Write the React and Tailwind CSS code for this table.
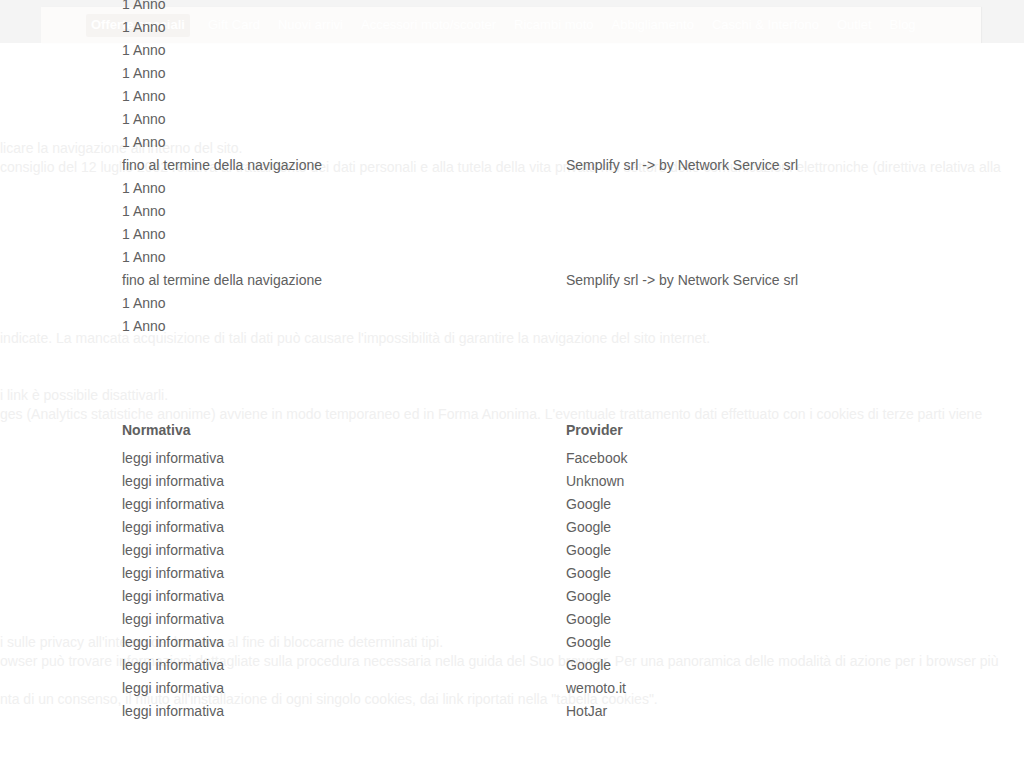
import React from "react";

const t1 = [
  ["1 Anno", ""],
  ["1 Anno", ""],
  ["1 Anno", ""],
  ["1 Anno", ""],
  ["1 Anno", ""],
  ["1 Anno", ""],
  ["1 Anno", ""],
  ["fino al termine della navigazione", "Semplify srl -> by Network Service srl"],
  ["1 Anno", ""],
  ["1 Anno", ""],
  ["1 Anno", ""],
  ["1 Anno", ""],
  ["fino al termine della navigazione", "Semplify srl -> by Network Service srl"],
  ["1 Anno", ""],
  ["1 Anno", ""],
];

const providers = [
  "Facebook",
  "Unknown",
  "Google",
  "Google",
  "Google",
  "Google",
  "Google",
  "Google",
  "Google",
  "Google",
  "wemoto.it",
  "HotJar",
];

const nav = [
  "Gift Card",
  "Nuovi arrivi",
  "Accessori moto/scooter",
  "Ricambi moto",
  "Abbigliamento",
  "Caschi & Interfono",
  "Outlet",
  "Blog",
];

export default function App() {
  return (
    <div className="relative w-full h-[768px] overflow-hidden bg-white font-['Liberation_Sans',Arial,sans-serif]">
      {/* header */}
      <div className="h-[43px] bg-[#f4f4f4] pt-[7px] pl-[41px]">
        <div className="w-[940px] h-[36px] bg-[#fcfbfa] flex items-center pl-[45px] gap-[18px] text-[13px] text-white shadow-[1px_0_1px_rgba(0,0,0,0.03)]">
          <div className="h-[23px] px-[5px] flex items-center bg-[#f6f4f2] rounded-[2px] font-bold">
            Offerte speciali
          </div>
          {nav.map((n, i) => (
            <span key={i} className="whitespace-nowrap">
              {n}
            </span>
          ))}
        </div>
      </div>

      {/* faint background text */}
      <div className="text-[14px] leading-[19px] text-[#f0f0f0] whitespace-nowrap">
        <div className="mt-[96px]">
          <div>licare la navigazione all'interno del sito.</div>
          <div>consiglio del 12 luglio 2002 relativa al trattamento dei dati personali e alla tutela della vita privata nel settore delle comunicazioni elettroniche (direttiva relativa alla</div>
        </div>
        <div className="mt-[152px]">
          <div>indicate. La mancata acquisizione di tali dati può causare l'impossibilità di garantire la navigazione del sito internet.</div>
        </div>
        <div className="mt-[38px]">
          <div>i link è possibile disattivarli.</div>
          <div>ges (Analytics statistiche anonime) avviene in modo temporaneo ed in Forma Anonima. L'eventuale trattamento dati effettuato con i cookies di terze parti viene</div>
        </div>
        <div className="mt-[209px]">
          <div>i sulle privacy all'interno del browser al fine di bloccarne determinati tipi.</div>
          <div>owser può trovare informazioni dettagliate sulla procedura necessaria nella guida del Suo browser. Per una panoramica delle modalità di azione per i browser più</div>
        </div>
        <div className="mt-[19px]">
          <div>nta di un consenso, il rifiuto all'installazione di ogni singolo cookies, dai link riportati nella "tabella cookies".</div>
        </div>
      </div>

      {/* overlaid tables */}
      <div className="absolute left-[122px] top-[-7px] w-[860px] text-[14px] text-[#606060]">
        {t1.map((r, i) => (
          <div key={i} className="grid grid-cols-[444px_1fr] h-[23px] items-center">
            <span>{r[0]}</span>
            <span>{r[1]}</span>
          </div>
        ))}
        <div className="grid grid-cols-[444px_1fr] h-[28px] items-center mt-[78px] font-bold">
          <span>Normativa</span>
          <span>Provider</span>
        </div>
        <div className="mt-[3px]">
          {providers.map((p, i) => (
            <div key={i} className="grid grid-cols-[444px_1fr] h-[23px] items-center">
              <span>leggi informativa</span>
              <span>{p}</span>
            </div>
          ))}
        </div>
      </div>
    </div>
  );
}
